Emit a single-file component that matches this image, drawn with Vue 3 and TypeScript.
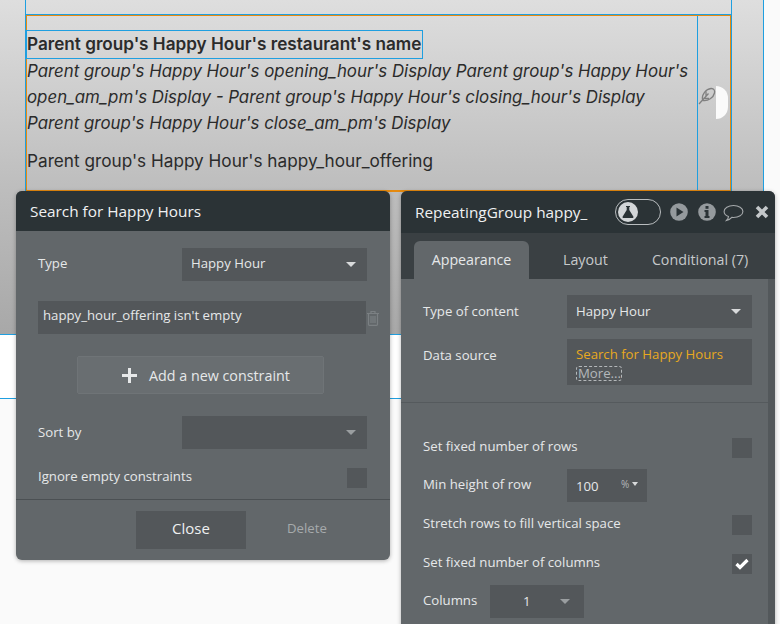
<script setup lang="ts">
const canvasLine1 = "Parent group's Happy Hour's opening_hour's Display Parent group's Happy Hour's open_am_pm's Display - Parent group's Happy Hour's closing_hour's Display Parent group's Happy Hour's close_am_pm's Display";
</script>

<template>
  <div class="page">
    <div class="canvas">
      <div class="canvas-inner">
        <div class="top-gap"></div>
        <div class="cell">
          <div class="cell-text">
            <div class="name">Parent group's Happy Hour's restaurant's name</div>
            <div class="hours">{{ canvasLine1 }}</div>
            <div class="offering">Parent group's Happy Hour's happy_hour_offering</div>
          </div>
          <div class="cell-side">
            <svg class="feather" viewBox="0 0 18 18" width="18" height="18" fill="none" stroke="#808080" stroke-width="1.300">
              <path d="M4.500 12.500C3.500 7.500 8 2 13 1.500C16 1.300 17 3.500 16.500 6C15.500 10.500 10 14.500 5 13.500Z" />
              <path d="M1 17L10.500 6.500M6 11.500H11M8 9V4.500" />
            </svg>
            <div class="half"></div>
          </div>
        </div>
      </div>
      <div class="rail"></div>
    </div>
    <div class="below">
      <div class="below-line"></div>
    </div>

    <section class="panel search">
      <header class="head"><span>Search for Happy Hours</span></header>
      <div class="search-body">
        <div class="row first">
          <label>Type</label>
          <div class="select"><span>Happy Hour</span><i class="caret"></i></div>
        </div>
        <div class="constraint">
          <div class="c-field">happy_hour_offering isn't empty</div>
          <svg class="trash" viewBox="0 0 14 16" width="14" height="16" fill="none" stroke="#7b8083" stroke-width="1.200">
            <path d="M1 3.500H13M5 3V1.500H9V3M2.500 3.500V14.500C2.500 15 3 15.300 3.500 15.300H10.500C11 15.300 11.500 15 11.500 14.500V3.500" />
            <path d="M5 6V13M7 6V13M9 6V13" />
          </svg>
        </div>
        <div class="add-wrap">
          <button class="add"><span class="plus"></span>Add a new constraint</button>
        </div>
        <div class="row sort">
          <label>Sort by</label>
          <div class="select"><span></span><i class="caret dim"></i></div>
        </div>
        <div class="row ignore">
          <label>Ignore empty constraints</label>
          <div class="check"></div>
        </div>
      </div>
      <footer class="foot">
        <button class="close">Close</button>
        <span class="delete">Delete</span>
      </footer>
    </section>

    <section class="panel props">
      <header class="head tall">
        <span class="title">RepeatingGroup happy_</span>
        <div class="toggle">
          <span class="knob">
            <svg viewBox="0 0 14 14" width="14" height="14">
              <path d="M5 1H9V2H8.300V5L12.300 11.500C12.800 12.300 12.300 13 11.500 13H2.500C1.700 13 1.200 12.300 1.700 11.500L5.700 5V2H5Z" fill="#2b3336" />
            </svg>
          </span>
        </div>
        <svg class="ic play" viewBox="0 0 18 18" width="18" height="18">
          <circle cx="9" cy="9" r="8.800" fill="#959a9d" />
          <path d="M6.500 4.500L13.500 9L6.500 13.500Z" fill="#2b3336" />
        </svg>
        <svg class="ic info" viewBox="0 0 18 18" width="18" height="18">
          <circle cx="9" cy="9" r="8.800" fill="#959a9d" />
          <rect x="7.500" y="3" width="3" height="2.800" fill="#2b3336" />
          <path d="M6.500 7H10.500V13H11.500V15H6.500V13H7.500V9H6.500Z" fill="#2b3336" />
        </svg>
        <svg class="ic bubble" viewBox="0 0 20 18" width="21" height="18" fill="none" stroke="#a4a8aa" stroke-width="1.100">
          <path d="M10 1.500C4.800 1.500 .6 4 .6 7.500C.6 9.800 2.400 11.600 5 12.600C4.800 14.100 4.200 15.300 3 16.500C5.300 16 7 15 8.300 13.400C8.900 13.500 9.400 13.500 10 13.500C15.200 13.500 19.400 11 19.400 7.500C19.400 4 15.200 1.500 10 1.500Z" />
        </svg>
        <svg class="ic x" viewBox="0 0 14 14" width="14" height="14" stroke="#c4c8ca" stroke-width="3.600">
          <path d="M2 2L12 12M12 2L2 12" />
        </svg>
      </header>
      <nav class="tabs">
        <span class="tab active">Appearance</span>
        <span class="tab layout">Layout</span>
        <span class="tab cond">Conditional (7)</span>
      </nav>
      <div class="props-body">
        <div class="props-scroll">
          <div class="row p1">
            <label>Type of content</label>
            <div class="select"><span>Happy Hour</span><i class="caret"></i></div>
          </div>
          <div class="row p2">
            <label>Data source</label>
            <div class="source">
              <span class="orange">Search for Happy Hours</span>
              <span class="more">More...</span>
            </div>
          </div>
          <div class="rule"></div>
          <div class="row p3">
            <label>Set fixed number of rows</label>
            <div class="check"></div>
          </div>
          <div class="row p4">
            <label>Min height of row</label>
            <div class="mini"><span class="val">100</span><span class="pct">%</span><i class="caret small"></i></div>
          </div>
          <div class="row p5">
            <label>Stretch rows to fill vertical space</label>
            <div class="check"></div>
          </div>
          <div class="row p6">
            <label>Set fixed number of columns</label>
            <div class="check">
              <svg viewBox="0 0 14 12" width="14" height="12" fill="none" stroke="#fff" stroke-width="3.200">
                <path d="M1.500 6L5 9.500L12.500 2" />
              </svg>
            </div>
          </div>
          <div class="row p7">
            <label>Columns</label>
            <div class="cols"><span>1</span><i class="caret dim"></i></div>
          </div>
        </div>
        <div class="scrollbar"></div>
      </div>
    </section>
  </div>
</template>

<style>
html, body { margin: 0; background: #fafafa; overflow: hidden; }
</style>

<style scoped>
.page {
  position: relative;
  width: 780px;
  height: 624px;
  overflow: hidden;
  background: #fafafa;
  font-family: "Open Sans", sans-serif;
}
.canvas {
  width: 764px;
  height: 335px;
  box-sizing: border-box;
  padding-left: 25px;
  display: flex;
  background: linear-gradient(#dedede, #bdbdbd 190px, #a8a8a8);
  border-right: 1px solid #1f9fe0;
  border-bottom: 1px solid #1f9fe0;
}
.canvas-inner {
  width: 707px;
  border-left: 1px solid #1f9fe0;
  border-right: 1px solid #1f9fe0;
  box-sizing: border-box;
}
.top-gap { height: 14px; border-bottom: 1px solid #1f9fe0; }
.cell {
  height: 177px;
  box-sizing: border-box;
  display: flex;
  border-top: 1px solid #e58a10;
  border-right: 1px solid #e58a10;
  border-bottom: 2px solid #e58a10;
  border-left: 1px solid #e58a10;
}
.cell-text {
  flex: 1;
  min-width: 0;
  padding-top: 14px;
  font-family: "Inter", sans-serif;
  color: #2b2b2b;
  font-size: 17.200px;
}
.name {
  width: fit-content;
  box-sizing: border-box;
  height: 29px;
  line-height: 26px;
  border: 1px solid #1f9fe0;
  margin-left: -1px;
  padding-right: 1px;
  font-size: 17.150px;
  font-weight: 600;
  white-space: nowrap;
}
.hours {
  font-size: 16.850px;
  font-style: italic;
  line-height: 26px;
  margin-top: -1px;
  width: 668px;
}
.offering { line-height: 26px; margin-top: 12px; }
.cell-side {
  width: 33px;
  box-sizing: border-box;
  border-left: 1px solid #1f9fe0;
  display: flex;
  align-items: flex-start;
  padding-top: 70px;
}
.feather { flex: none; margin-top: 1px; }
.half {
  width: 12px;
  height: 33px;
  background: #fafafa;
  border-radius: 0 12px 12px 0;
}
.rail { flex: 1; }
.below {
  height: 63px;
  width: 764px;
  background: #fff;
  border-bottom: 1px solid #1f9fe0;
}
.panel {
  position: absolute;
  top: 191px;
  width: 374px;
  background: #62676a;
  color: #e6e8e9;
  border-radius: 6px;
  box-shadow: 0 1px 4px rgba(0, 0, 0, 0.3);
  font-size: 13.200px;
  overflow: hidden;
}
.search { left: 16px; height: 369px; }
.props { left: 401px; height: 440px; }
.head {
  height: 40px;
  background: #2b3336;
  padding-left: 14px;
  display: flex;
  align-items: center;
  font-size: 15.350px;
  color: #f0f1f2;
}
.head.tall { height: 42px; position: relative; }
.row { display: flex; align-items: center; justify-content: space-between; }
label { color: #e6e8e9; line-height: 18px; margin-top: -2px; margin-bottom: 2px; }
.select {
  width: 185px;
  height: 33px;
  box-sizing: border-box;
  background: #53575a;
  padding: 0 9px;
  display: flex;
  align-items: center;
  justify-content: space-between;
}
.select span { padding-bottom: 4px; }
.p1 label { margin-top: -1px; margin-bottom: 1px; }
.p1 .select span { padding-bottom: 2px; }
.sort label { margin-top: -1px; margin-bottom: 1px; }
.caret {
  width: 0;
  height: 0;
  border-left: 5px solid transparent;
  border-right: 5px solid transparent;
  border-top: 5px solid #d8dadb;
  margin-right: 2px;
}
.caret.dim { border-top-color: #9a9ea0; }
.caret.small { border-left-width: 3.500px; border-right-width: 3.500px; border-top-width: 4px; margin-right: 0; }
.search-body { padding: 17px 23px 0 22px; height: 229px; box-sizing: content-box; border-bottom: 1px solid #4b5053; padding-bottom: 22px; }
.constraint { display: flex; align-items: center; margin-top: 20px; width: 342px; }
.c-field {
  width: 328px;
  height: 33px;
  line-height: 29px;
  background: #53575a;
  padding-left: 5px;
  box-sizing: border-box;
  flex: none;
}
.trash { flex: none; }
.add-wrap { display: flex; margin-top: 22px; padding-left: 39px; }
.add {
  width: 247px;
  height: 38px;
  background: #696e71;
  border: 1px solid #6f7477;
  border-radius: 2px;
  color: #e6e8e9;
  font: inherit;
  font-size: 14.300px;
  display: flex;
  align-items: center;
  padding: 0 0 0 44px;
  box-sizing: border-box;
}
.plus {
  width: 15px;
  height: 15px;
  margin-right: 12px;
  background:
    linear-gradient(#e6e8e9, #e6e8e9) center / 15px 3px no-repeat,
    linear-gradient(#e6e8e9, #e6e8e9) center / 3px 15px no-repeat;
}
.sort { margin-top: 22px; }
.ignore { margin-top: 19px; }
.check {
  width: 20px;
  height: 20px;
  background: #53575a;
  display: flex;
  align-items: center;
  justify-content: center;
}
.foot {
  display: flex;
  align-items: center;
  padding: 11px 0 0 120px;
}
.close {
  width: 110px;
  height: 38px;
  background: #53575a;
  border: 0;
  color: #eff0f1;
  font: inherit;
  font-size: 15px;
  padding: 0 0 5px;
}
.delete { margin-left: 41px; color: #a6aaac; margin-top: -5px; }
.title { width: 200px; flex: none; white-space: nowrap; }
.toggle {
  width: 46px;
  height: 26px;
  box-sizing: border-box;
  border: 1px solid #b9bdbf;
  border-radius: 13px;
  display: flex;
  align-items: center;
  padding-left: 2px;
  margin-right: 9px;
}
.knob {
  width: 20px;
  height: 20px;
  border-radius: 50%;
  background: #d3d6d8;
  display: flex;
  align-items: center;
  justify-content: center;
}
.ic { flex: none; }
.play { margin-right: 10px; }
.info { margin-right: 7px; }
.bubble { margin-right: 11px; margin-top: 2px; }
.tabs {
  height: 46px;
  box-sizing: border-box;
  background: #3a4043;
  display: flex;
  align-items: flex-end;
  padding-left: 13px;
  font-size: 14.250px;
  color: #c6c9cb;
}
.tab { height: 38px; line-height: 37px; }
.tab.active {
  width: 115px;
  text-align: center;
  background: #62676a;
  border-radius: 6px 6px 0 0;
  color: #e6e8e9;
}
.tab.layout { margin-left: 34px; }
.tab.cond { margin-left: 44px; }
.props-body { display: flex; height: 352px; }
.props-scroll { flex: 1; padding: 16px 16px 0 22px; min-width: 0; }
.scrollbar { width: 7px; background: #53585b; }
.p2 { margin-top: 11px; align-items: flex-start; }
.p2 label { margin-top: 7px; margin-bottom: 0; }
.source {
  width: 185px;
  height: 46px;
  box-sizing: border-box;
  background: #53575a;
  padding: 6px 9px 0;
  display: flex;
  flex-direction: column;
  align-items: flex-start;
  line-height: 18px;
}
.orange { color: #e8a91e; white-space: nowrap; }
.more {
  color: #b4b8ba;
  border: 1px dashed #b4b8ba;
  border-radius: 3px;
  line-height: 13px;
  padding: 0 0 0 1px;
  margin-top: 3px;
}
.rule { height: 1px; background: #555a5d; margin: 17px -16px 0 -22px; }
.p3 { margin-top: 35px; }
.p4 { margin-top: 11px; justify-content: flex-start; }
.p4 label { width: 144px; flex: none; }
.mini {
  width: 80px;
  height: 33px;
  box-sizing: border-box;
  background: #53575a;
  padding-left: 9px;
  display: flex;
  align-items: center;
}
.val { width: 44px; }
.pct { font-size: 10px; color: #b4b8ba; margin-right: 3px; margin-top: -3px; margin-left: 1px; }
.mini .caret { margin-top: -3px; }
.p5 { margin-top: 13px; }
.p6 { margin-top: 19px; }
.p7 { margin-top: 11px; justify-content: flex-start; }
.p7 label { width: 67px; flex: none; }
.cols {
  width: 94px;
  height: 33px;
  box-sizing: border-box;
  background: #53575a;
  display: flex;
  align-items: center;
  padding-left: 33px;
}
.cols span { width: 37px; padding-bottom: 1px; }
.cols .caret { margin: 0; }
</style>
